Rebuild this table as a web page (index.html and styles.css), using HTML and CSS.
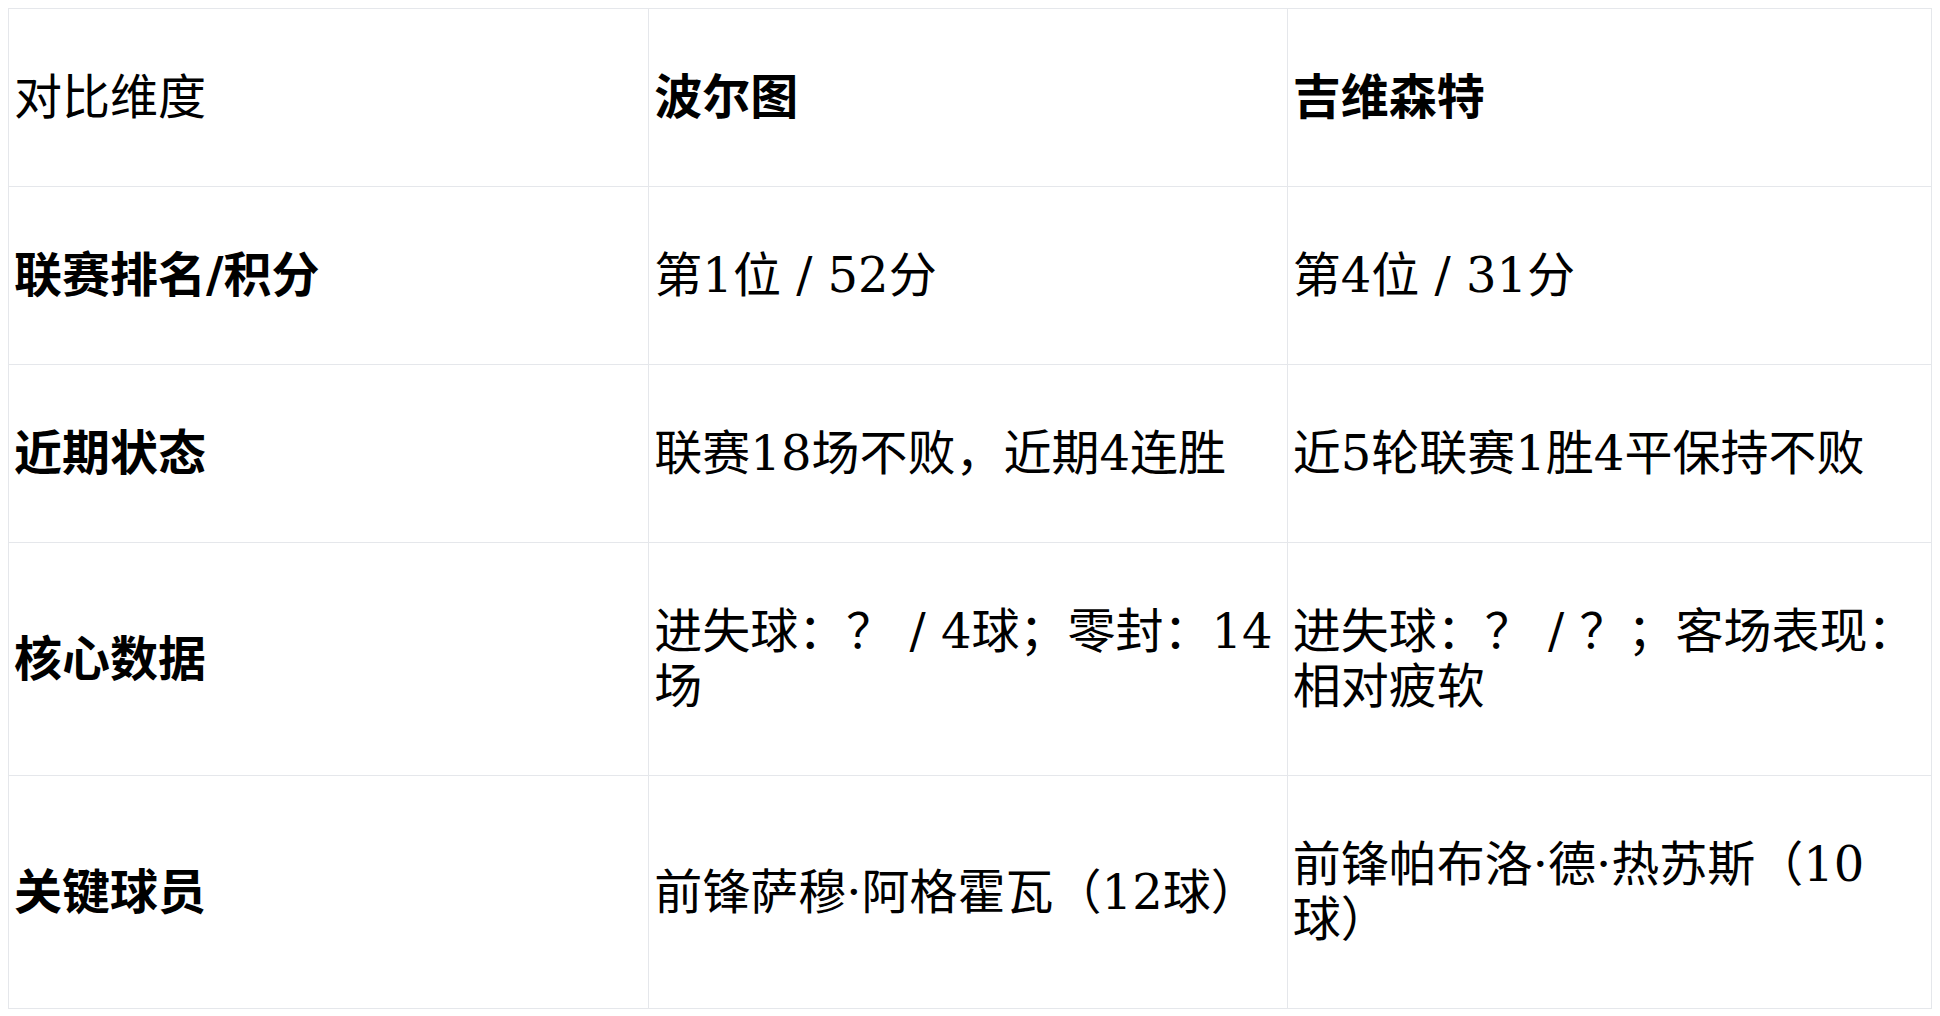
FILE: index.html
```html
<!DOCTYPE html>
<html lang="zh-CN">
<head>
<meta charset="utf-8">
<title>波尔图 vs 吉维森特</title>
<link rel="stylesheet" href="styles.css">
</head>
<body>
<table class="compare">
  <colgroup>
    <col class="col-dim">
    <col class="col-home">
    <col class="col-away">
  </colgroup>
  <thead>
    <tr>
      <td class="cell">对比维度</td>
      <th class="cell">波尔图</th>
      <th class="cell">吉维森特</th>
    </tr>
  </thead>
  <tbody>
    <tr>
      <th class="cell">联赛排名/积分</th>
      <td class="cell">第1位 / 52分</td>
      <td class="cell">第4位 / 31分</td>
    </tr>
    <tr>
      <th class="cell">近期状态</th>
      <td class="cell">联赛18场不败，近期4连胜</td>
      <td class="cell">近5轮联赛1胜4平保持不败</td>
    </tr>
    <tr>
      <th class="cell">核心数据</th>
      <td class="cell">进失球：？ / 4球；零封：14场</td>
      <td class="cell">进失球：？ / ？；客场表现：相对疲软</td>
    </tr>
    <tr>
      <th class="cell">关键球员</th>
      <td class="cell">前锋萨穆·阿格霍瓦（12球）</td>
      <td class="cell">前锋帕布洛·德·热苏斯（10球）</td>
    </tr>
  </tbody>
</table>
</body>
</html>
```
FILE: styles.css
```css
html, body {
  background: #ffffff;
}
body {
  margin: 8px;
  font-family: "DejaVu Serif", "Noto Sans CJK SC", serif;
  color: #000000;
}
.compare {
  width: 100%;
  table-layout: fixed;
  border-collapse: collapse;
  font-size: 48px;
  line-height: 55px;
}
.col-dim {
  width: 33.3%;
}
.col-home {
  width: 33.2%;
}
.cell {
  border: 1px solid #e5e7eb;
  padding: 61px 5px;
  text-align: left;
  vertical-align: middle;
  font-weight: 400;
}
th.cell {
  font-weight: 700;
}
```
